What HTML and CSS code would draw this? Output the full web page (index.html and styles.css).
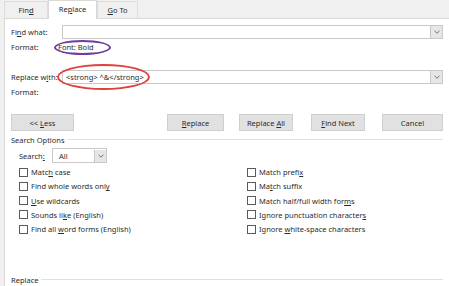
FILE: index.html
```html
<!DOCTYPE html>
<html>
<head>
<meta charset="utf-8">
<link rel="stylesheet" href="styles.css">
</head>
<body>
<div class="dialog">
  <div class="tabs">
    <div class="tab"><span>Fin<u>d</u></span></div>
    <div class="tab active"><span>Re<u>p</u>lace</span></div>
    <div class="tab"><span><u>G</u>o To</span></div>
  </div>
  <div class="panel">
    <div class="field-row">
      <span class="label">Fi<u>n</u>d what:</span>
      <div class="combo"><span class="combo-text"></span><span class="combo-btn"><svg width="6" height="4" viewBox="0 0 6 4"><path d="M0.5 0.8 L3 3.2 L5.5 0.8" fill="none" stroke="#666" stroke-width="0.9"/></svg></span></div>
    </div>
    <div class="format-row">
      <span class="label">Format:</span>
      <span class="format-val">Font: Bold</span>
      <span class="ring ring-purple"></span>
    </div>
    <div class="field-row second">
      <span class="label">Replace w<u>i</u>th:</span>
      <div class="combo"><span class="combo-text">&lt;strong&gt; ^&amp;&lt;/strong&gt;</span><span class="combo-btn"><svg width="6" height="4" viewBox="0 0 6 4"><path d="M0.5 0.8 L3 3.2 L5.5 0.8" fill="none" stroke="#666" stroke-width="0.9"/></svg></span></div>
      <span class="ring ring-red"></span>
    </div>
    <div class="format-row">
      <span class="label">Format:</span>
    </div>
    <div class="buttons">
      <button class="btn less">&lt;&lt; <u>L</u>ess</button>
      <div class="btn-group">
        <button class="btn"><u>R</u>eplace</button>
        <button class="btn">Replace <u>A</u>ll</button>
        <button class="btn"><u>F</u>ind Next</button>
        <button class="btn">Cancel</button>
      </div>
    </div>
    <div class="section-title"><span>Search Options</span><span class="rule"></span></div>
    <div class="search-row">
      <span class="search-label">Search<u>:</u></span>
      <div class="select"><span class="select-text">All</span><span class="combo-btn"><svg width="6" height="4" viewBox="0 0 6 4"><path d="M0.5 0.8 L3 3.2 L5.5 0.8" fill="none" stroke="#666" stroke-width="0.9"/></svg></span></div>
    </div>
    <div class="options">
      <div class="col">
        <label class="opt"><span class="box"></span><span>Matc<u>h</u> case</span></label>
        <label class="opt"><span class="box"></span><span>Find whole words onl<u>y</u></span></label>
        <label class="opt"><span class="box"></span><span><u>U</u>se wildcards</span></label>
        <label class="opt"><span class="box"></span><span>Sounds li<u>k</u>e (English)</span></label>
        <label class="opt"><span class="box"></span><span>Find all <u>w</u>ord forms (English)</span></label>
      </div>
      <div class="col">
        <label class="opt"><span class="box"></span><span>Match prefi<u>x</u></span></label>
        <label class="opt"><span class="box"></span><span>Ma<u>t</u>ch suffix</span></label>
        <label class="opt"><span class="box"></span><span>Match half/full width for<u>m</u>s</span></label>
        <label class="opt"><span class="box"></span><span>Ignore punctuation character<u>s</u></span></label>
        <label class="opt"><span class="box"></span><span>Ignore <u>w</u>hite-space characters</span></label>
      </div>
    </div>
    <div class="section-title bottom"><span>Replace</span><span class="rule"></span></div>
  </div>
</div>
</body>
</html>
```
FILE: styles.css
```css
* { box-sizing: border-box; }
html, body { margin: 0; padding: 0; }
body {
  width: 449px;
  height: 286px;
  overflow: hidden;
  background: #f0f0f0;
  font-family: "Noto Sans", "Open Sans", sans-serif;
  font-size: 7.5px;
  color: #2b2b2b;
}
u { text-decoration-thickness: 1px; text-underline-offset: 1px; }
.dialog { display: flex; flex-direction: column; height: 286px; padding-left: 4px; }
.tabs { display: flex; height: 19px; align-items: flex-end; }
.tab {
  height: 17px;
  display: flex;
  align-items: center;
  justify-content: center;
  border: 1px solid #dcdcdc;
  border-bottom: none;
  background: #f0f0f0;
}
.tab:nth-child(1) { width: 44px; }
.tab:nth-child(2) { width: 49px; }
.tab:nth-child(3) { width: 41px; }
.tab.active {
  height: 19px;
  background: #fff;
  border-color: #d9d9d9;
  margin-bottom: -1px;
  position: relative;
  z-index: 1;
  padding-bottom: 2px;
}
.panel {
  flex: 1;
  background: #fff;
  border-left: 1px solid #d9d9d9;
  border-top: 1px solid #d9d9d9;
  padding: 6px 6px 0 6px;
  position: relative;
}
.field-row { display: flex; align-items: center; height: 14px; position: relative; }
.field-row.second { margin-top: 15px; }
.label { width: 51px; flex: none; }
.combo {
  flex: 1;
  height: 14px;
  border: 1px solid #c9c9c9;
  display: flex;
  align-items: center;
  background: #fff;
}
.combo-text { flex: 1; padding-left: 3px; }
.combo-btn {
  width: 12px;
  height: 12px;
  background: #e6e6e6;
  border-left: 1px solid #c9c9c9;
  display: flex;
  align-items: center;
  justify-content: center;
}
.format-row { display: flex; align-items: center; height: 16px; position: relative; }
.format-val { margin-left: -4px; }
.ring { position: absolute; border-radius: 50%; pointer-events: none; }
.ring-purple { left: 43px; top: 1px; width: 57px; height: 15px; border: 2px solid #6b3fa0; }
.ring-red { left: 46px; top: -6px; width: 93px; height: 26px; border: 2px solid #e0413c; }
.buttons { display: flex; justify-content: space-between; margin-top: 14px; height: 17px; }
.btn {
  height: 17px;
  background: #e1e1e1;
  border: 1px solid #cfcfcf;
  font: inherit;
  color: inherit;
  padding: 0;
}
.less { width: 63px; }
.btn-group { display: flex; gap: 15px; }
.btn-group .btn { width: 57px; }
.btn-group .btn:nth-child(2) { width: 54px; }
.btn-group .btn:nth-child(3) { width: 54px; margin-left: 3px; }
.btn-group .btn:nth-child(4) { width: 61px; margin-left: 2px; }
.section-title { display: flex; align-items: center; gap: 3px; margin-top: 2px; height: 13px; }
.section-title .rule { flex: 1; border-top: 1px solid #e0e0e0; }
.section-title.bottom { margin-top: 37px; }
.search-row { display: flex; align-items: center; height: 15px; margin-top: 2px; padding-left: 8px; }
.search-label { width: 33px; }
.select {
  width: 55px;
  height: 15px;
  border: 1px solid #c9c9c9;
  display: flex;
  align-items: center;
}
.select-text { flex: 1; padding-left: 6px; }
.options { display: flex; padding-left: 8px; margin-top: 2px; }
.col { display: flex; flex-direction: column; }
.col:first-child { width: 228px; }
.opt { display: flex; align-items: center; height: 14.25px; }
.box {
  width: 9px;
  height: 9px;
  border: 1px solid #5a5a5a;
  background: #fff;
  margin-right: 3px;
  flex: none;
}
```
